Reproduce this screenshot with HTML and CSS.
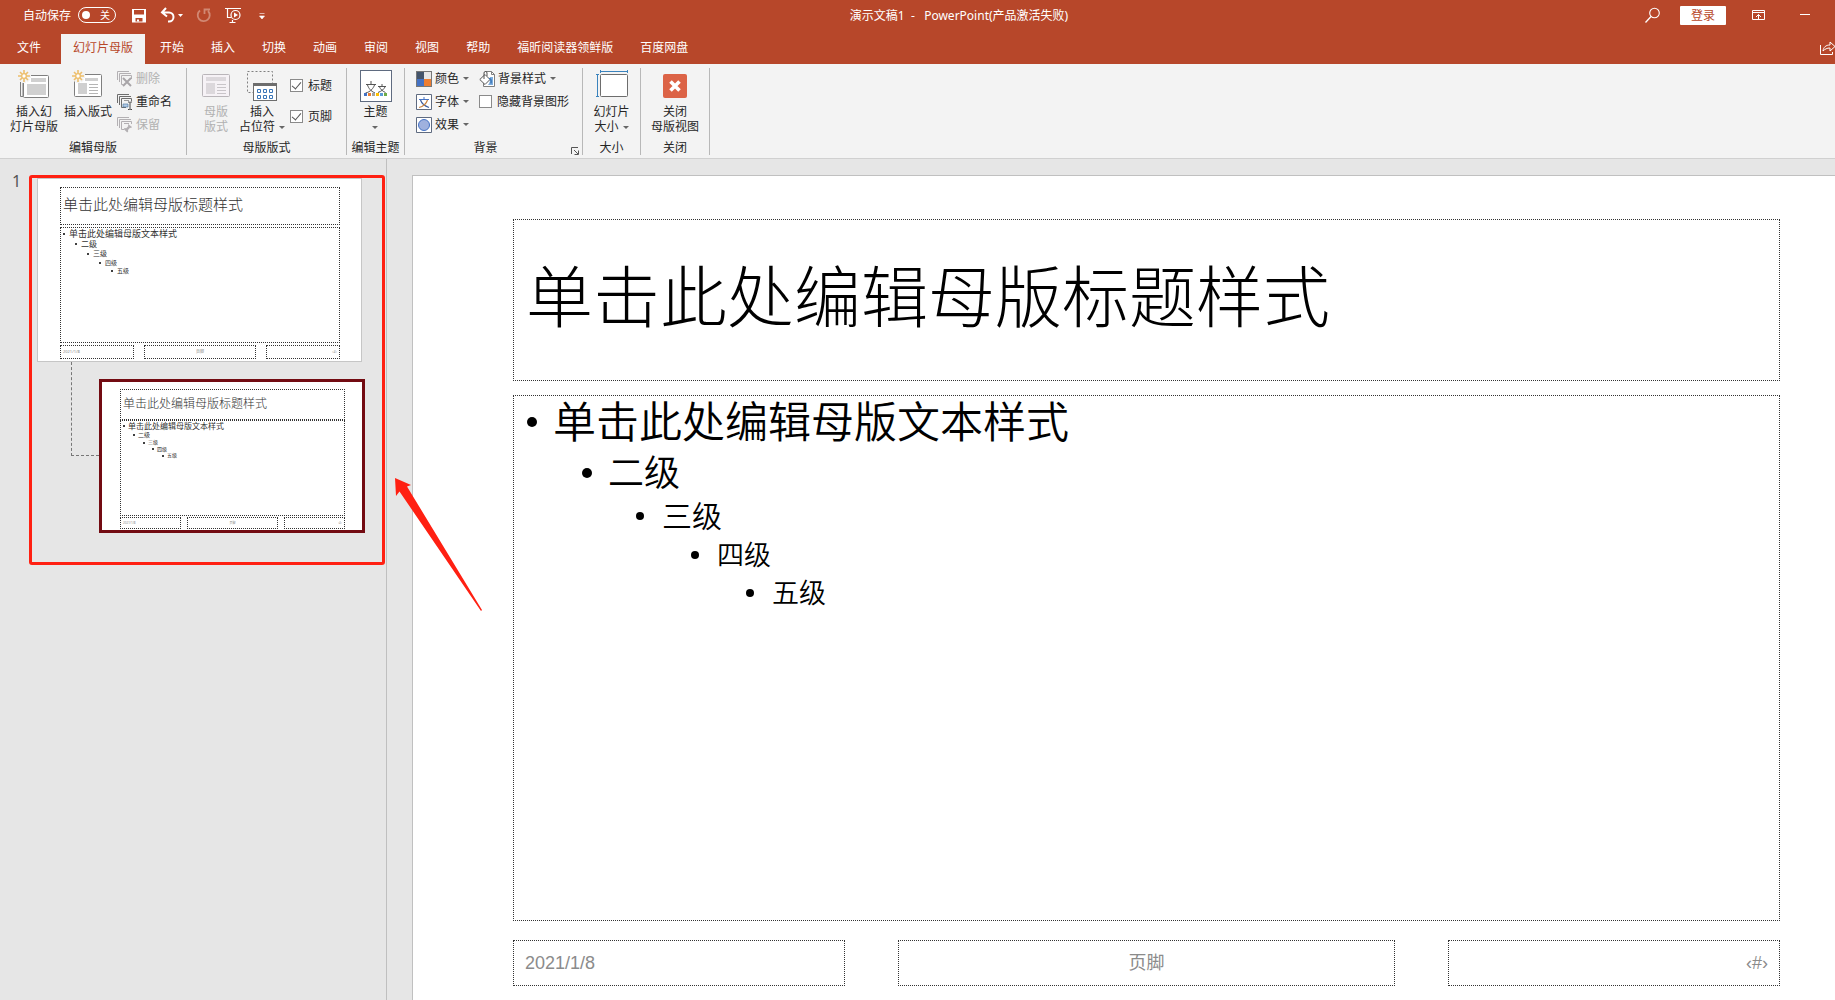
FILE: index.html
```html
<!DOCTYPE html>
<html lang="zh-CN">
<head>
<meta charset="utf-8">
<title>演示文稿1 - PowerPoint</title>
<link rel="stylesheet" href="styles.css">
</head>
<body>
<header class="titlebar">
  <div class="quick-access">
    <label class="autosave">自动保存
      <span class="switch"><input type="checkbox"><span>关</span></span>
    </label>
    <button class="icon-btn" aria-label="保存"><svg width="16" height="16" viewBox="0 0 16 16"><path d="M1 2h14v13.500H1z" fill="#fff"/><path d="M3 3h10v4.500H3zM4.500 11h7v3.500h-7z" fill="#b7472a"/><path d="M6 12.500h2v2H6z" fill="#fff"/></svg></button>
    <span class="undo">
      <button class="icon-btn" aria-label="撤消"><svg width="16" height="16" viewBox="0 0 16 16"><path d="M6 1 2 5.500 7 9.500M2 5.500H9a4.500 4.500 0 0 1 0 9H8" fill="none" stroke="#fff" stroke-width="2"/></svg></button>
      <button class="caret-btn" aria-label="撤消列表"><svg width="5" height="3" viewBox="0 0 5 3"><path d="M0 0h5L2.500 3z" fill="#fff"/></svg></button>
    </span>
    <button class="icon-btn" aria-label="重复" disabled><svg width="16" height="16" viewBox="0 0 16 16"><path d="M4 3.500A6 6 0 1 0 12 4M8.500 7V2.500H14" fill="none" stroke="#d18873" stroke-width="1.800"/></svg></button>
    <button class="icon-btn" aria-label="从头开始"><svg width="16" height="16" viewBox="0 0 16 16"><path d="M0 1.500h16M2.500 2v8.500H6M4.500 15.500h6M7.500 13v2" fill="none" stroke="#fff" stroke-width="1.200"/><circle cx="10.500" cy="8" r="4.500" fill="none" stroke="#fff" stroke-width="1.200"/><path d="M9 5.500v5L13 8z" fill="#fff"/></svg></button>
    <button class="icon-btn" aria-label="自定义快速访问工具栏"><svg width="16" height="16" viewBox="0 0 16 16"><path d="M5.500 6.500h5M5.500 9h5L8 12z" fill="#fff" stroke="#fff" stroke-width=".6"/></svg></button>
  </div>
  <h1 class="doc-title">演示文稿1&nbsp; -&nbsp; &nbsp;PowerPoint(产品激活失败)</h1>
  <div class="window-tools">
    <button class="icon-btn" aria-label="搜索"><svg width="16" height="16" viewBox="0 0 16 16"><circle cx="9.500" cy="6" r="4.800" fill="none" stroke="#fff" stroke-width="1.100"/><path d="M6 9.500 .5 15.500" stroke="#fff" stroke-width="1.300"/></svg></button>
    <button class="login">登录</button>
    <button class="icon-btn" aria-label="功能区显示选项"><svg width="14" height="12" viewBox="0 0 14 12"><path d="M.5 1.500h12v9H.5zM.5 3.500h12M6.500 10V5.500M4 8l2.500-2.500L9 8" fill="none" stroke="#fff"/></svg></button>
    <button class="icon-btn minimize" aria-label="最小化"><svg width="10" height="2" viewBox="0 0 10 2"><path d="M0 .5h10" stroke="#fff"/></svg></button>
  </div>
</header>

<nav class="tabs">
  <a class="tab file" href="#">文件</a>
  <a class="tab active" href="#">幻灯片母版</a>
  <a class="tab" href="#">开始</a>
  <a class="tab" href="#">插入</a>
  <a class="tab" href="#">切换</a>
  <a class="tab" href="#">动画</a>
  <a class="tab" href="#">审阅</a>
  <a class="tab" href="#">视图</a>
  <a class="tab" href="#">帮助</a>
  <a class="tab" href="#">福昕阅读器领鲜版</a>
  <a class="tab" href="#">百度网盘</a>
  <button class="icon-btn share" aria-label="共享"><svg width="16" height="16" viewBox="0 0 16 16"><path d="M1.500 5v9.500h12V12" fill="none" stroke="#fff"/><path d="M4 11c.5-4 3-6 7-6V2l5 4.500-5 4.500V8C8 8 6 9 4 11z" fill="none" stroke="#fff"/></svg></button>
</nav>

<section class="ribbon">
  <div class="group g-edit">
    <div class="tools">
      <button class="big"><svg width="32" height="32" viewBox="0 0 32 32"><path d="M2.500 12v14.500H5M5 10v16" fill="none" stroke="#7f7f7f"/><rect x="5.500" y="5.500" width="25" height="22" rx="1" fill="#fff" stroke="#7f7f7f"/><path d="M13 8h15v4H13zM9 14h19v11H9z" fill="#d0d0d0"/><g stroke="#f3f3f3" stroke-width="4"><path d="M6 0v13M0 6h13M2 2l9 9M11 2l-9 9"/></g><path d="M6 0v4M6 8v4M0 6h4M8 6h4M2 2l2.500 2.500M7.500 7.500 10 10M10 2 7.500 4.500M4.500 7.500 2 10" stroke="#edbf6c" stroke-width="1.600"/><circle cx="6" cy="6" r="2.300" fill="#fff" stroke="#edbf6c" stroke-width="1.300"/></svg><span>插入幻<br>灯片母版</span></button>
      <button class="big"><svg width="32" height="32" viewBox="0 0 32 32"><rect x="2.500" y="4.500" width="27" height="22" rx="1" fill="#fff" stroke="#7f7f7f"/><path d="M13 8h13v3H13zM6 13h9v11H6z" fill="#d0d0d0"/><path d="M17 14.500h9M17 17.500h9M17 20.500h9M17 23.500h9" stroke="#b5b5b5"/><g stroke="#f3f3f3" stroke-width="4"><path d="M6 0v13M0 6h13M2 2l9 9M11 2l-9 9"/></g><path d="M6 0v4M6 8v4M0 6h4M8 6h4M2 2l2.500 2.500M7.500 7.500 10 10M10 2 7.500 4.500M4.500 7.500 2 10" stroke="#edbf6c" stroke-width="1.600"/><circle cx="6" cy="6" r="2.300" fill="#fff" stroke="#edbf6c" stroke-width="1.300"/></svg><span>插入版式</span></button>
      <div class="stack">
        <button class="small" disabled><svg width="16" height="16" viewBox="0 0 16 16"><path d="M.5 9V.5H12M2.500 11V2.500H14M4.500 8V4.500h10V8M4.500 8v5.500H6" fill="none" stroke="#b3b0b3"/><path d="m6 7 8 8M14 7l-8 8" stroke="#a8a5a8" stroke-width="2"/></svg>删除</button>
        <button class="small"><svg width="16" height="16" viewBox="0 0 16 16"><path d="M.5 9V.5H12M2.500 11V2.500H14M9 13.500H4.500v-9h10V7" fill="none" stroke="#6d6d6d"/><path d="M7 6.500h5" stroke="#999"/><path d="M6 10h5v3H6z" fill="#b3cbe6" stroke="#41719c" stroke-width=".6"/><path d="M11 8h1.500l.5.500.5-.5H15M13 8.500v6.500M11 15.500h1.500l.5-.5.5.500H15" fill="none" stroke="#444"/></svg>重命名</button>
        <button class="small" disabled><svg width="16" height="16" viewBox="0 0 16 16"><path d="M.5 9V.5H12M2.500 11V2.500H14M7 12.500H4.500v-8h10V7M7 6.500h5" fill="none" stroke="#b3b0b3"/><path d="m11 7 4 3-1 1-1-.3-2 2.300.2 1.500-1 1-3.500-3.500 1-1 1.500.2 2-2z" fill="#b3b0b3"/></svg>保留</button>
      </div>
    </div>
    <h2 class="group-name">编辑母版</h2>
  </div>
  <div class="group g-layout">
    <div class="tools">
      <button class="big narrow" disabled><svg width="32" height="32" viewBox="0 0 32 32"><rect x="2.500" y="4.500" width="27" height="22" rx="1" fill="#f6f2f6" stroke="#b9b5b9"/><path d="M6 7h20v4H6zM6 13h9v11H6z" fill="#dcd8dc"/><path d="M17 14.500h9M17 17.500h9M17 20.500h9M17 23.500h9" stroke="#c9c5c9"/></svg><span>母版<br>版式</span></button>
      <button class="big"><svg width="32" height="32" viewBox="0 0 32 32"><path d="M1.500 1.500h25v21h-25z" fill="none" stroke="#808080" stroke-dasharray="2 2"/><rect x="7.500" y="13.500" width="23" height="17" fill="#fff" stroke="#6d6d6d"/><path d="M7 13h24v3H7z" fill="#6d6d6d"/><g fill="#fff" stroke="#3a76b8"><path d="M11.500 19.500h3v3h-3zM17.500 19.500h3v3h-3zM23.500 19.500h3v3h-3zM11.500 25.500h3v3h-3zM17.500 25.500h3v3h-3zM23.500 25.500h3v3h-3z"/></g></svg><span>插入<br>占位符<i class="caret"></i></span></button>
      <div class="stack checks">
        <label class="check"><input type="checkbox" checked>标题</label>
        <label class="check"><input type="checkbox" checked>页脚</label>
      </div>
    </div>
    <h2 class="group-name">母版版式</h2>
  </div>
  <div class="group g-theme">
    <div class="tools centered">
      <button class="big"><svg width="32" height="32" viewBox="0 0 32 32"><rect x=".5" y=".5" width="31" height="31" fill="#fff" stroke="#5f6b80"/><path d="M6 14.500h10M11 11v3M7.500 15c1 3 3 6 7.500 8M14.500 15c-1 3-4 7-9 8" fill="none" stroke="#555"/><path d="M18 16.500h8M22 14v2M19.500 17c1 2 2.500 4 6 5.500M25 17c-1 2-3 4-7 5.500" fill="none" stroke="#555"/><path d="M4 23h3v3H4z" fill="#4472c4"/><path d="M8 23h3v3H8z" fill="#ed7d31"/><path d="M12 23h3v3h-3z" fill="#a5a5a5"/><path d="M16 23h3v3h-3z" fill="#ffc000"/><path d="M20 23h3v3h-3z" fill="#5b9bd5"/><path d="M24 23h3v3h-3z" fill="#70ad47"/></svg><span>主题<br><i class="caret alone"></i></span></button>
    </div>
    <h2 class="group-name">编辑主题</h2>
  </div>
  <div class="group g-background">
    <div class="tools">
      <div class="stack">
        <button class="small"><svg width="16" height="16" viewBox="0 0 16 16"><path d="M0 0h16v16H0z" fill="#777"/><path d="M1 1h7v7H1z" fill="#44546a"/><path d="M8 1h7v7H8z" fill="#e7e6e6"/><path d="M1 8h7v7H1z" fill="#4472c4"/><path d="M8 8h7v7H8z" fill="#ed7d31"/></svg>颜色<i class="caret"></i></button>
        <button class="small"><svg width="16" height="16" viewBox="0 0 16 16"><path d="M.5.5h15v15H.5z" fill="#fff" stroke="#5f6b80"/><path d="M3 5.500h10M8 3v2" stroke="#4472c4"/><path d="M4.500 6c1 3 3 5.500 8.500 7.500" fill="none" stroke="#3d5f9f" stroke-width="1.200"/><path d="M11.500 6c-1 3-4 6.500-8.500 7.500" fill="none" stroke="#c98441" stroke-width="1.200"/></svg>字体<i class="caret"></i></button>
        <button class="small"><svg width="16" height="16" viewBox="0 0 16 16"><path d="M.5.5h15v15H.5z" fill="#fff" stroke="#5f6b80"/><circle cx="8" cy="8" r="5.500" fill="#9fb1de" stroke="#4472c4"/></svg>效果<i class="caret"></i></button>
      </div>
      <div class="stack">
        <button class="small"><svg width="16" height="16" viewBox="0 0 16 16"><path d="M6 .5h6.500l3 3v12h-11V12" fill="#fff" stroke="#7f7f7f"/><path d="M12.500.5v3h3" fill="none" stroke="#7f7f7f"/><path d="M11 6h3v8H9c2-2 2-5 2-8z" fill="#7faede"/><path d="M.8 8.500 6 3.500l5 5-5 5z" fill="#fff" stroke="#555"/><path d="M5 8V2a1.500 1.500 0 0 1 3 0v3" fill="none" stroke="#555"/><path d="M10 7.500c2 0 2.500 2 2 5" fill="none" stroke="#3a76b8" stroke-width="1.500"/></svg>背景样式<i class="caret"></i></button>
        <label class="check"><input type="checkbox">隐藏背景图形</label>
      </div>
    </div>
    <div class="group-foot">
      <h2 class="group-name">背景</h2>
      <button class="launcher" aria-label="设置背景格式"><svg width="8" height="8" viewBox="0 0 8 8"><path d="M.5 7V.5H7M3 3l4 4M7.500 3.500v4h-4" fill="none" stroke="#555"/></svg></button>
    </div>
  </div>
  <div class="group g-size">
    <div class="tools centered">
      <button class="big"><svg width="32" height="32" viewBox="0 0 32 32"><path d="M4.500 1.500h27M4.500 0v3M31.500 0v3M1.500 4.500v22M0 4.500h3M0 26.500h3" fill="none" stroke="#3a83bd"/><rect x="4.500" y="4.500" width="27" height="22" rx="1" fill="#fff" stroke="#6d6d6d"/></svg><span>幻灯片<br>大小<i class="caret"></i></span></button>
    </div>
    <h2 class="group-name">大小</h2>
  </div>
  <div class="group g-close">
    <div class="tools centered">
      <button class="big"><svg width="32" height="32" viewBox="0 0 32 32"><rect x="4" y="4" width="24" height="24" rx="2" fill="#dc6346"/><path d="m11.500 11.500 9 9M20.500 11.500l-9 9" stroke="#fff" stroke-width="3.600"/></svg><span>关闭<br>母版视图</span></button>
    </div>
    <h2 class="group-name">关闭</h2>
  </div>
</section>

<main class="workspace">
  <aside class="thumbs">
    <span class="master-no">1</span>
    <div class="thumb-list">
      <div class="thumb master">
        <div class="ph t-title">单击此处编辑母版标题样式</div>
        <ul class="ph t-body">
          <li>单击此处编辑母版文本样式</li><li>二级</li><li>三级</li><li>四级</li><li>五级</li>
        </ul>
        <div class="t-foot"><div class="ph">2021/1/8</div><div class="ph">页脚</div><div class="ph">‹#›</div></div>
      </div>
      <div class="branch">
        <div class="connector"></div>
        <div class="thumb layout">
          <div class="ph t-title">单击此处编辑母版标题样式</div>
          <ul class="ph t-body">
            <li>单击此处编辑母版文本样式</li><li>二级</li><li>三级</li><li>四级</li><li>五级</li>
          </ul>
          <div class="t-foot"><div class="ph">2021/1/8</div><div class="ph">页脚</div><div class="ph">‹#›</div></div>
        </div>
      </div>
    </div>
    <div class="mark-box"></div>
    <svg class="mark-arrow" width="90" height="136" viewBox="0 0 90 136"><path d="M1 1 17 8l-4 1.500L88 133l-1 1L5.500 14.500 2 19z" fill="#ff2012"/></svg>
  </aside>
  <div class="canvas">
    <article class="slide">
      <div class="ph title">单击此处编辑母版标题样式</div>
      <ul class="ph body">
        <li>单击此处编辑母版文本样式</li>
        <li>二级</li>
        <li>三级</li>
        <li>四级</li>
        <li>五级</li>
      </ul>
      <div class="foot">
        <div class="ph">2021/1/8</div>
        <div class="ph">页脚</div>
        <div class="ph">‹#›</div>
      </div>
    </article>
  </div>
</main>
</body>
</html>
```
FILE: styles.css
```css
* { box-sizing: border-box; }

body {
  margin: 0;
  min-height: 100vh;
  display: flex;
  flex-direction: column;
  overflow-x: hidden;
  font: 12px/15px "Noto Sans", "Noto Sans CJK SC", sans-serif;
  color: #262626;
  background: #e6e6e6;
}

button {
  font: inherit;
  color: inherit;
  background: none;
  border: 0;
  padding: 0;
}

svg { display: block; flex: none; }
h1, h2, ul { margin: 0; padding: 0; font-size: 12px; font-weight: 400; }
ul { list-style: none; }

/* title bar */
.titlebar {
  display: flex;
  align-items: center;
  height: 34px;
  padding-bottom: 4px;
  color: #fff;
  background: #b7472a;
}
.quick-access {
  display: flex;
  align-items: center;
  gap: 13px;
  width: 273px;
  padding-left: 23px;
}
.autosave { display: flex; align-items: center; gap: 7px; margin-right: 2px; }
.switch {
  display: flex;
  align-items: center;
  justify-content: space-between;
  width: 38px;
  height: 16px;
  padding: 0 5px 0 3px;
  border: 1px solid #fff;
  border-radius: 8px;
  font-size: 10px;
}
.switch input {
  appearance: none;
  width: 8px;
  height: 8px;
  margin: 0;
  border-radius: 50%;
  background: #fff;
}
.undo { display: flex; align-items: center; gap: 2px; }
.doc-title { flex: 1; text-align: center; }
.window-tools { display: flex; align-items: center; width: 190px; }
.login {
  width: 46px;
  height: 19px;
  margin: 0 26px 0 19px;
  border-radius: 1px;
  color: #b7472a;
  background: #fff;
}
.minimize { margin-left: 34px; }

/* ribbon tabs */
.tabs {
  display: flex;
  gap: 3px;
  height: 30px;
  padding-left: 5px;
  background: #b7472a;
}
.tab {
  padding: 0 12px;
  line-height: 28px;
  color: #fff;
  text-decoration: none;
  white-space: nowrap;
}
.tab.file { margin-right: 5px; }
.tab.active { color: #b7472a; background: #f3f3f3; }
.share { margin-left: auto; padding-bottom: 3px; }

/* ribbon */
.ribbon {
  display: flex;
  padding: 4px 0 3px;
  background: #f3f3f3;
  border-bottom: 1px solid #d0d0d0;
}
.group {
  display: flex;
  flex-direction: column;
  border-right: 1px solid #b8b8b8;
}
.g-edit { width: 187px; }
.g-layout { width: 160px; }
.g-theme, .g-size { width: 58px; }
.g-background { width: 178px; }
.g-close { width: 69px; }
.tools { display: flex; align-items: flex-start; gap: 4px; height: 72px; }
.g-edit .tools { padding-left: 9px; }
.g-layout .tools { padding-left: 11px; }
.g-background .tools { padding-left: 11px; gap: 10px; }
.centered { justify-content: center; }
.group-name { flex: 1; text-align: center; }
.group-foot { display: flex; align-items: flex-end; }
.launcher { padding: 0 3px 0 5px; }
.big {
  display: flex;
  flex-direction: column;
  align-items: center;
  gap: 2px;
  width: 50px;
  padding-top: 2px;
  white-space: nowrap;
}
.g-layout .big { width: 48px; }
.g-layout .narrow { width: 36px; }
button:disabled { color: #b1b1b1; }
.stack { display: flex; flex-direction: column; gap: 2px; }
.checks { gap: 9px; padding-top: 6px; }
.small, .check {
  display: flex;
  align-items: center;
  gap: 3px;
  height: 21px;
  white-space: nowrap;
}
.checks .check { height: 22px; }
.check { gap: 5px; }
.check input {
  appearance: none;
  display: flex;
  justify-content: center;
  width: 13px;
  height: 13px;
  margin: 0;
  border: 1px solid #8a8a8a;
  background: #fff;
}
.check input:checked::after {
  content: "";
  width: 4px;
  height: 8px;
  border: solid #555;
  border-width: 0 1px 1px 0;
  transform: rotate(40deg);
}
.caret {
  display: inline-block;
  margin-left: 4px;
  border: solid transparent;
  border-width: 3px 3px 0;
  border-top-color: #666;
  vertical-align: middle;
}
.small .caret { margin-left: 1px; }
.caret.alone { margin-left: 0; }

/* placeholders shared by slide and thumbnails */
.ph { border: 1px dotted #333; white-space: nowrap; }
li { display: flex; align-items: center; }
li::before { content: ""; flex: none; border-radius: 50%; background: #000; }

/* workspace */
.workspace { flex: 1; display: flex; }
.thumbs {
  position: relative;
  display: flex;
  width: 387px;
  padding-top: 19px;
  border-right: 1px solid #bfbfbf;
}
.master-no { width: 37px; padding-left: 12px; font-size: 16px; line-height: 7px; color: #555; }
.thumb {
  display: flex;
  flex-direction: column;
  background: #fff;
  color: #333;
}
.t-title { display: flex; align-items: center; font-weight: 300; }
.t-foot { display: grid; grid-template-columns: 74fr 112fr 74fr; color: #888; }
.t-foot .ph { padding: 0 2px; }
.t-foot .ph:nth-child(2), .foot .ph:nth-child(2) { text-align: center; }
.t-foot .ph:nth-child(3), .foot .ph:nth-child(3) { text-align: right; }
.t-body li::before { width: 2px; height: 2px; }

.master {
  width: 325px;
  height: 184px;
  padding: 8px 21px 2px 22px;
  border: 1px solid #c6c6c6;
  gap: 2px;
}
.master .t-title { height: 38px; padding: 0 0 3px 2px; font-size: 15px; }
.master .t-body { flex: 1; padding-top: 1px; }
.master li { gap: 4px; padding-left: 2px; font-size: 9px; line-height: 10px; }
.master li:nth-child(2) { padding-left: 14px; font-size: 8px; }
.master li:nth-child(3) { padding-left: 26px; font-size: 7px; }
.master li:nth-child(4) { padding-left: 38px; font-size: 6px; line-height: 8px; }
.master li:nth-child(5) { padding-left: 50px; font-size: 6px; line-height: 8px; }
.master .t-foot { gap: 10px; font-size: 4px; line-height: 12px; }

.branch { display: flex; padding-left: 34px; }
.connector {
  width: 28px;
  height: 94px;
  border: dashed #777;
  border-width: 0 0 1px 1px;
}
.layout {
  width: 266px;
  height: 154px;
  margin-top: 17px;
  padding: 7px 17px 1px 18px;
  border: 3px solid #730b12;
}
.layout .t-title { height: 31px; padding: 0 0 2px 2px; font-size: 12px; }
.layout .t-body { flex: 1; margin-bottom: 1px; }
.layout li { gap: 3px; padding-left: 2px; font-size: 8px; line-height: 10px; }
.layout li:nth-child(2) { padding-left: 12px; font-size: 6px; line-height: 8px; }
.layout li:nth-child(3) { padding-left: 22px; font-size: 5px; line-height: 7px; }
.layout li:nth-child(4) { padding-left: 31px; font-size: 5px; line-height: 6px; }
.layout li:nth-child(5) { padding-left: 41px; font-size: 5px; line-height: 7px; }
.layout .t-foot { gap: 6px; font-size: 3px; line-height: 10px; }

/* red annotation laid over the window */
.mark-box {
  position: absolute;
  left: 29px;
  top: 16px;
  width: 356px;
  height: 390px;
  border: 3px solid #ff2012;
  border-radius: 3px;
}
.mark-arrow { position: absolute; left: 394px; top: 318px; z-index: 1; }

/* slide being edited */
.canvas { flex: 1; display: flex; min-width: 0; padding: 16px 0 0 25px; }
.slide {
  flex: 1;
  display: flex;
  flex-direction: column;
  min-width: 0;
  padding: 43px 55px 14px 100px;
  border: solid #c0c0c0;
  border-width: 1px 0 0 1px;
  color: #000;
  background: #fff;
}
.title {
  display: flex;
  align-items: center;
  height: 162px;
  padding: 0 12px 8px;
  font-size: 67px;
  line-height: 80px;
  font-weight: 300;
}
.body { flex: 1; margin: 14px 0 19px; font-weight: 350; }
.body li { padding-left: 13px; font-size: 43px; line-height: 52px; }
.body li::before { width: 10px; height: 10px; margin-right: 16px; }
.body li:nth-child(2) { padding-left: 68px; font-size: 36px; line-height: 49px; }
.body li:nth-child(3) { padding-left: 122px; font-size: 30px; line-height: 38px; }
.body li:nth-child(4) { padding-left: 177px; font-size: 27px; line-height: 40px; }
.body li:nth-child(5) { padding-left: 232px; font-size: 27px; line-height: 36px; }
.body li:nth-child(n+3)::before { width: 8px; height: 8px; margin-right: 18px; }
.foot {
  display: grid;
  grid-template-columns: 332fr 497fr 332fr;
  gap: 53px;
  font-size: 18px;
  line-height: 44px;
  font-family: "Liberation Sans", "Noto Sans CJK SC", sans-serif;
  color: #8b8b8b;
}
.foot .ph { padding: 0 11px; }
```
